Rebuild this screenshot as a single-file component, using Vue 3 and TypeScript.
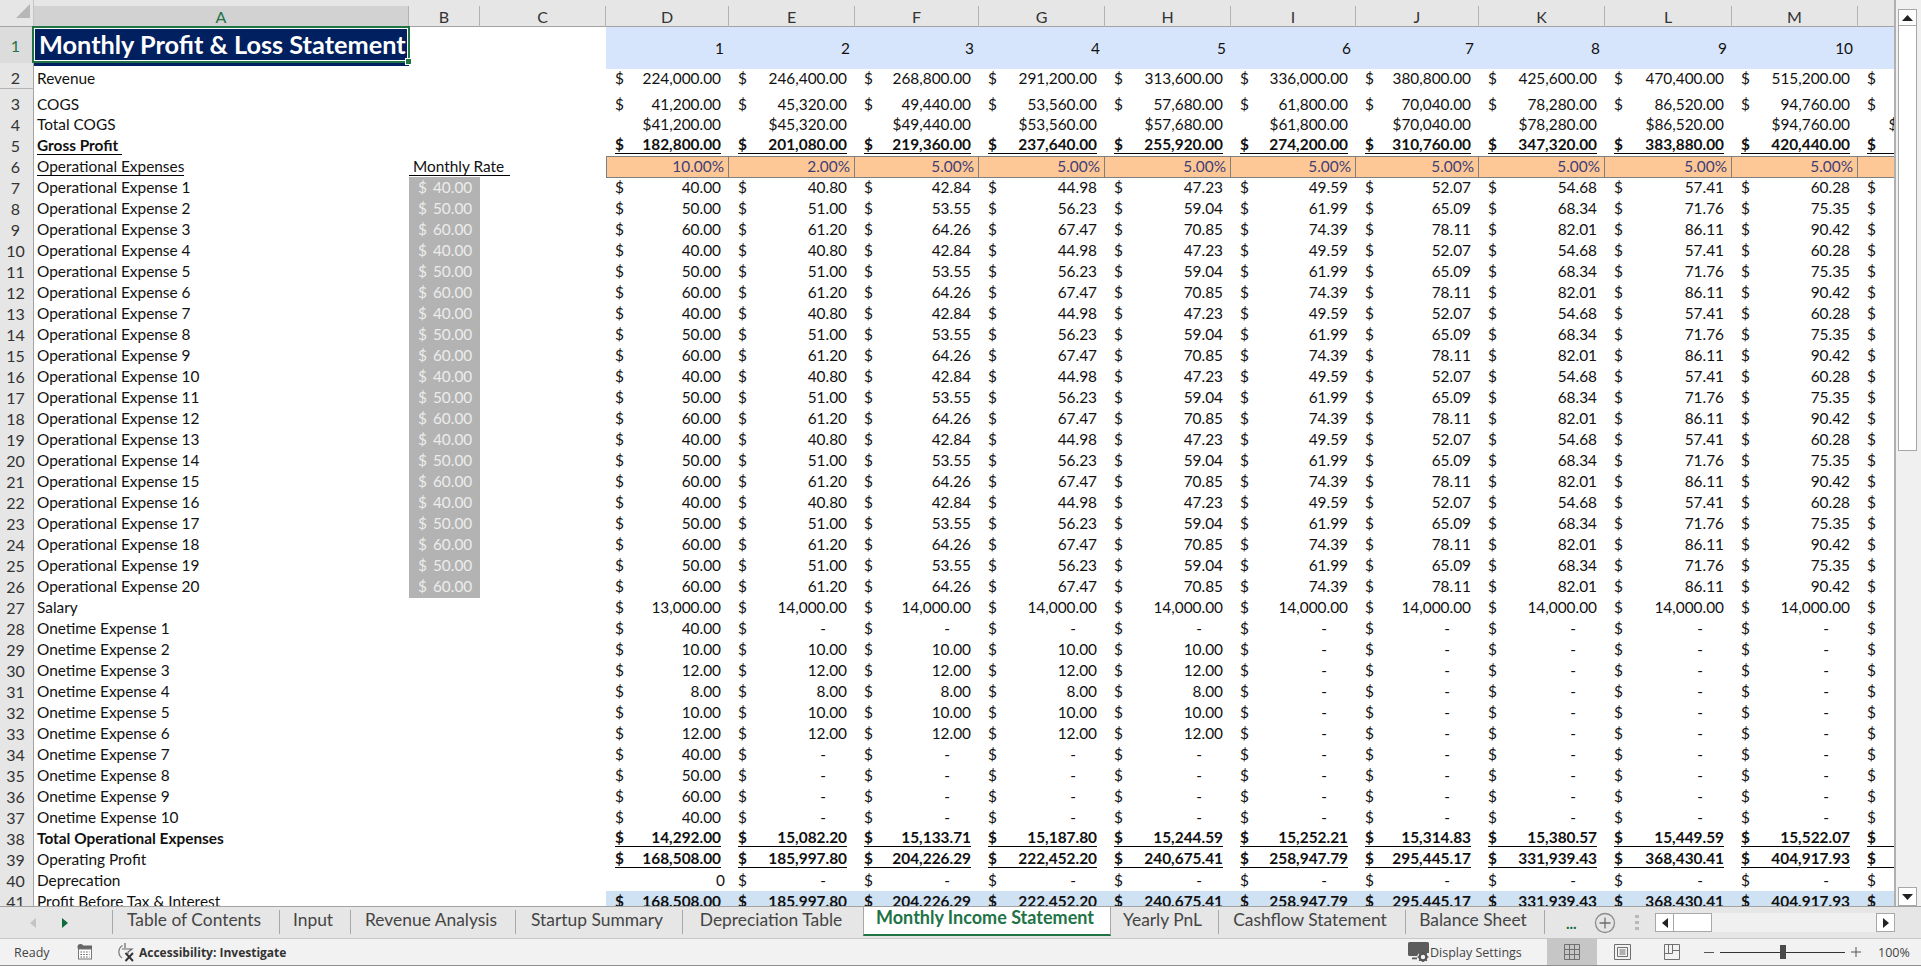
<script setup lang="ts">
interface Cell {
  kind: 'acct' | 'plain' | 'dash' | 'blank';
  text: string;
}

interface Row {
  n: number;
  label: string;
  cls: string;
  rate?: string;
  cells: Cell[];
}

const colLetters = ['D', 'E', 'F', 'G', 'H', 'I', 'J', 'K', 'L', 'M', 'N'];

const acct = (values: string[]): Cell[] => values.map((text) => ({ kind: 'acct', text }));
const plain = (values: string[]): Cell[] => values.map((text) => ({ kind: 'plain', text }));

// amounts of the three repeating operational expenses
const opex: Record<string, string[]> = {
  '40': ['40.00', '40.80', '42.84', '44.98', '47.23', '49.59', '52.07', '54.68', '57.41', '60.28', '63.29'],
  '50': ['50.00', '51.00', '53.55', '56.23', '59.04', '61.99', '65.09', '68.34', '71.76', '75.35', '79.12'],
  '60': ['60.00', '61.20', '64.26', '67.47', '70.85', '74.39', '78.11', '82.01', '86.11', '90.42', '94.94'],
};
const opexRates = ['40', '50', '60', '40', '50', '60', '40', '50', '60', '40', '50', '60', '40', '50', '60', '40', '50', '60', '50', '60'];

const oneTime = (value: string, months: number): Cell[] => {
  const cells: Cell[] = [];
  for (let i = 0; i < 11; i++) {
    cells.push(i < months ? { kind: 'acct', text: value } : { kind: 'dash', text: '-' });
  }
  return cells;
};

const operating = ['168,508.00', '185,997.80', '204,226.29', '222,452.20', '240,675.41', '258,947.79', '295,445.17', '331,939.43', '368,430.41', '404,917.93', '441,402.86'];
const cogs = ['41,200.00', '45,320.00', '49,440.00', '53,560.00', '57,680.00', '61,800.00', '70,040.00', '78,280.00', '86,520.00', '94,760.00', '103,000.00'];

const rows: Row[] = [
  { n: 2, label: 'Revenue', cls: 'r2', cells: acct(['224,000.00', '246,400.00', '268,800.00', '291,200.00', '313,600.00', '336,000.00', '380,800.00', '425,600.00', '470,400.00', '515,200.00', '560,000.00']) },
  { n: 3, label: 'COGS', cls: 'r3', cells: acct(cogs) },
  { n: 4, label: 'Total COGS', cls: '', cells: plain(cogs.map((v) => '$' + v)) },
  { n: 5, label: 'Gross Profit ', cls: 'gross', cells: acct(['182,800.00', '201,080.00', '219,360.00', '237,640.00', '255,920.00', '274,200.00', '310,760.00', '347,320.00', '383,880.00', '420,440.00', '457,000.00']) },
  { n: 6, label: 'Operational Expenses', cls: 'inputs', cells: plain(['10.00%', '2.00%', '5.00%', '5.00%', '5.00%', '5.00%', '5.00%', '5.00%', '5.00%', '5.00%', '5.00%']) },
];

opexRates.forEach((rate, i) => {
  rows.push({ n: 7 + i, label: `Operational Expense ${i + 1}`, cls: '', rate, cells: acct(opex[rate]) });
});

rows.push({ n: 27, label: 'Salary', cls: '', cells: acct(['13,000.00', ...Array(10).fill('14,000.00')]) });

const oneTimes: [string, number][] = [
  ['40.00', 1], ['10.00', 5], ['12.00', 5], ['8.00', 5], ['10.00', 5],
  ['12.00', 5], ['40.00', 1], ['50.00', 1], ['60.00', 1], ['40.00', 1],
];
oneTimes.forEach(([value, months], i) => {
  rows.push({ n: 28 + i, label: `Onetime Expense ${i + 1}`, cls: '', cells: oneTime(value, months) });
});

rows.push(
  { n: 38, label: 'Total Operational Expenses', cls: 'total', cells: acct(['14,292.00', '15,082.20', '15,133.71', '15,187.80', '15,244.59', '15,252.21', '15,314.83', '15,380.57', '15,449.59', '15,522.07', '15,597.14']) },
  { n: 39, label: 'Operating Profit', cls: 'subtotal', cells: acct(operating) },
  { n: 40, label: 'Deprecation', cls: 'depr', cells: [{ kind: 'plain', text: '0' }, ...oneTime('', 0).slice(1)] },
  { n: 41, label: 'Profit Before Tax & Interest', cls: 'ebit', cells: acct(operating) },
);

const months = ['1', '2', '3', '4', '5', '6', '7', '8', '9', '10', ''];

const tabs = ['Table of Contents', 'Input', 'Revenue Analysis', 'Startup Summary', 'Depreciation Table', 'Monthly Income Statement', 'Yearly PnL', 'Cashflow Statement', 'Balance Sheet'];
const activeTab = 'Monthly Income Statement';
</script>

<template>
  <div class="excel">
    <div class="workspace">
      <div class="sheet">
        <div class="row head">
          <div class="corner">
            <svg width="14" height="14" viewBox="0 0 14 14"><path d="M14 0V14H0Z" fill="#b7b7b7" /></svg>
          </div>
          <div class="col selected">A</div>
          <div class="col">B</div>
          <div class="col">C</div>
          <div v-for="c in colLetters" :key="c" class="col">{{ c }}</div>
        </div>

        <div class="row r1">
          <div class="num selected">1</div>
          <div class="a title"><span>Monthly Profit &amp; Loss Statement</span></div>
          <div></div>
          <div></div>
          <div v-for="(m, i) in months" :key="i" class="cell month">{{ m }}</div>
          <div class="selection"><i class="handle"></i></div>
        </div>

        <div v-for="row in rows" :key="row.n" class="row" :class="row.cls">
          <div class="num">{{ row.n }}</div>
          <div class="a"><span class="label">{{ row.label }}</span></div>
          <div v-if="row.rate" class="b rate"><span>$</span><span>{{ row.rate }}.00</span></div>
          <div v-else-if="row.n === 6" class="b heading"><span>Monthly Rate&nbsp;</span></div>
          <div v-else class="b"></div>
          <div></div>
          <div v-for="(cell, i) in row.cells" :key="i" class="cell" :class="cell.kind">
            <template v-if="cell.kind === 'plain'">{{ cell.text }}</template>
            <div v-else class="money"><span>$</span><span>{{ cell.text }}</span></div>
          </div>
        </div>
      </div>

      <div class="vscroll">
        <div class="vbtn"><svg width="11" height="6" viewBox="0 0 11 6"><path d="M5.5 0 11 6H0Z" fill="#222" /></svg></div>
        <div class="vthumb"></div>
        <div class="vbtn down"><svg width="11" height="6" viewBox="0 0 11 6"><path d="M0 0H11L5.5 6Z" fill="#222" /></svg></div>
      </div>
    </div>

    <div class="tabbar">
      <div class="nav">
        <svg width="6" height="10" viewBox="0 0 6 10"><path d="M6 0V10L0 5Z" fill="#c4c4c4" /></svg>
        <svg width="6" height="10" viewBox="0 0 6 10"><path d="M0 0V10L6 5Z" fill="#0e6b3a" /></svg>
      </div>
      <div class="tabs">
        <div v-for="t in tabs" :key="t" class="tab" :class="{ active: t === activeTab }">{{ t }}</div>
      </div>
      <div class="more">...</div>
      <svg class="add" width="22" height="22" viewBox="0 0 22 22">
        <circle cx="11" cy="11" r="9.5" fill="none" stroke="#8c8c8c" stroke-width="1.3" />
        <path d="M11 5.5V16.5M5.5 11H16.5" stroke="#6e6e6e" stroke-width="1.3" />
      </svg>
      <div class="grip"><i></i><i></i><i></i></div>
      <div class="hscroll">
        <div class="hbtn"><svg width="6" height="10" viewBox="0 0 6 10"><path d="M6 0V10L0 5Z" fill="#222" /></svg></div>
        <div class="hthumb"></div>
        <div class="hbtn end"><svg width="6" height="10" viewBox="0 0 6 10"><path d="M0 0V10L6 5Z" fill="#222" /></svg></div>
      </div>
    </div>

    <div class="status">
      <span class="ready">Ready</span>
      <svg class="macro" width="16" height="16" viewBox="0 0 16 16">
        <circle cx="3.5" cy="3" r="3" fill="#666" />
        <rect x="6" y="1.5" width="9" height="3.5" fill="#666" />
        <rect x="1.5" y="5" width="13" height="10" fill="#fff" stroke="#777" />
        <path d="M3.5 8H12.5M3.5 10.5H12.5M3.5 13H12.5" stroke="#555" stroke-dasharray="1.5 1.3" />
      </svg>
      <svg class="access" width="20" height="20" viewBox="0 0 20 20">
        <path d="M5.5 3.5A7.5 7.5 0 0 0 5 16" fill="none" stroke="#777" stroke-width="1.2" />
        <path d="M8 1V6M5 7H15L11 10V12" fill="none" stroke="#666" stroke-width="1.2" />
        <path d="M8.5 11 16 19M16 11 8.5 19" stroke="#333" stroke-width="1.9" />
      </svg>
      <span class="investigate">Accessibility: Investigate</span>

      <svg class="display" width="21" height="20" viewBox="0 0 21 20">
        <path d="M1.5 0H19.5A1.5 1.5 0 0 1 21 1.5V11H11L9 14H1.5A1.5 1.5 0 0 1 0 12.5V1.5A1.5 1.5 0 0 1 1.5 0Z" fill="#5c5c5c" />
        <rect x="4" y="15.5" width="5" height="1.8" fill="#5c5c5c" />
        <circle cx="15" cy="15" r="3.4" fill="none" stroke="#555" stroke-width="2.4" />
        <path d="M15 9.5V11.5M15 18.5V20M9.6 15H11.6M18.4 15H20.4M11.2 11.2 12.6 12.6M17.4 17.4 18.8 18.8M11.2 18.8 12.6 17.4M17.4 12.6 18.8 11.2" stroke="#555" stroke-width="1.6" />
      </svg>
      <span class="display-label">Display Settings</span>
      <div class="view on">
        <svg width="16" height="16" viewBox="0 0 16 16"><path d="M.5.5H15.5V15.5H.5ZM.5 5.5H15.5M.5 10.5H15.5M5.5.5V15.5M10.5.5V15.5" fill="none" stroke="#6f6f6f" /></svg>
      </div>
      <div class="view">
        <svg width="17" height="16" viewBox="0 0 17 16"><path d="M.5.5H16.5V15.5H.5ZM3.5 3.5H13.5V12.5H3.5ZM5.5 6H11.5M5.5 8H11.5M5.5 10H11.5" fill="none" stroke="#6f6f6f" /></svg>
      </div>
      <div class="view">
        <svg width="16" height="16" viewBox="0 0 16 16"><path d="M.5.5H15.5V15.5H.5ZM.5 9.5H8.5V.5M8.5 6.5H15.5M4.5.5V9.5" fill="none" stroke="#6f6f6f" /></svg>
      </div>
      <div class="zoom">
        <i class="sign"></i>
        <div class="slider"><i class="knob"></i></div>
        <svg width="10" height="10" viewBox="0 0 10 10"><path d="M0 5H10M5 0V10" stroke="#555" /></svg>
        <span class="pct">100%</span>
      </div>
    </div>
  </div>
</template>

<style scoped>
.excel {
  width: 1921px;
  height: 966px;
  display: flex;
  flex-direction: column;
  font-family: Lato, "Liberation Sans", sans-serif;
  font-size: 15.4px;
  color: #111;
  background: #fff;
  overflow: hidden;
}

.workspace {
  height: 906px;
  display: flex;
}

.sheet {
  width: 1894px;
  overflow: hidden;
  background: #fff;
}

.row {
  position: relative;
  display: grid;
  grid-template-columns: 34px 375px 71px 126px 123px 126px 124px 126px 126px 125px 123px 126px 127px 126px 126px;
  height: 21px;
  line-height: 20px;
}

.row > div {
  white-space: nowrap;
  min-width: 0;
}

.head {
  height: 27px;
  padding-top: 6px;
  background: #e6e6e6;
  border-bottom: 1px solid #a3a3a3;
  box-sizing: border-box;
}

.corner {
  display: flex;
  justify-content: flex-end;
  padding: 4px 3px 0 0;
  border-right: 1px solid #c4c4c4;
  margin-top: -6px;
  box-sizing: border-box;
}

.col {
  text-align: center;
  font-size: 16px;
  line-height: 21px;
  color: #333;
  border-right: 1px solid #b3b3b3;
  box-sizing: border-box;
}

.col.selected {
  background: #d2d2d2;
  color: #217346;
}

.num {
  background: #e6e6e6;
  border-right: 1px solid #a3a3a3;
  border-bottom: 1px solid #b5b5b5;
  box-sizing: border-box;
  text-align: center;
  font-size: 16px;
  line-height: 21px;
  color: #333;
  padding-right: 2px;
}

.num.selected {
  background: #dcdcdc;
  color: #217346;
  line-height: 38px;
}

.a {
  padding-left: 3px;
}

.r1 {
  height: 36px;
}

.r2 {
  height: 26px;
}

.r3 {
  height: 25px;
}

.r2 > div,
.r3 > div {
  padding-top: 5px;
  box-sizing: border-box;
}

.r2 > .num,
.r3 > .num {
  padding-top: 4px;
}

.title {
  background: #002060;
  color: #fff;
  font-size: 25.3px;
  font-weight: 700;
  line-height: 31px;
  padding-left: 5px;
  margin: 2px 0 3px;
}

.selection {
  position: absolute;
  left: 32px;
  top: -1px;
  width: 378px;
  height: 37px;
  box-sizing: border-box;
  border: 2px solid #217346;
  box-shadow: inset 0 0 0 1px #fff;
}

.handle {
  position: absolute;
  right: -4px;
  bottom: -4px;
  width: 5px;
  height: 5px;
  background: #217346;
  border: 1px solid #fff;
}

.cell {
  box-sizing: border-box;
  padding: 0 8px 0 9px;
}

.month {
  background: #d6e5fb;
  text-align: right;
  padding-right: 5px;
  line-height: 42px;
}

.plain {
  text-align: right;
}

.money {
  display: flex;
  justify-content: space-between;
}

.dash .money span:last-child {
  padding-right: 21px;
}

.rate {
  background: #b3b3b3;
  color: #ececec;
  padding-left: 9px;
  display: flex;
  gap: 6px;
}

.heading span {
  padding: 0 2px 0 4px;
  border-bottom: 1px solid #000;
  display: inline-block;
  line-height: 18px;
}

.inputs .a .label {
  display: inline-block;
  border-bottom: 1px solid #000;
  line-height: 18px;
}

.inputs .cell {
  background: #fec896;
  color: #3f3f76;
  padding: 0 4px 0 0;
  border: 1px solid #7f7f7f;
  border-left: 0;
  line-height: 19px;
}

.inputs .cell:nth-child(5) {
  border-left: 1px solid #7f7f7f;
}

.gross .label {
  font-weight: 700;
  display: inline-block;
  border-bottom: 1px solid #000;
  line-height: 18px;
  white-space: pre;
}

.gross .cell,
.total .cell,
.subtotal .cell {
  font-weight: 700;
}

.gross .money,
.total .money,
.subtotal .money {
  border-bottom: 1px solid #000;
  line-height: 18px;
}

.total .label,
.ebit .cell {
  font-weight: 700;
}

.ebit .cell {
  background: #cfe2f3;
}

.depr > .plain {
  padding-right: 4px;
}

.vscroll {
  width: 27px;
  background: #f0f0f0;
  border-left: 2px solid #b0b0b0;
  box-sizing: border-box;
  padding: 9px 4px 0 2px;
  position: relative;
  display: flex;
  flex-direction: column;
}

.vbtn {
  height: 17px;
  background: #fff;
  border: 1px solid #a8a8a8;
  box-sizing: border-box;
  display: flex;
  align-items: center;
  justify-content: center;
}

.vbtn.down {
  margin-top: auto;
  height: 19px;
}

.vthumb {
  height: 425px;
  background: #fff;
  border: 1px solid #a8a8a8;
  border-top: 0;
  box-sizing: border-box;
}

.tabbar {
  height: 32px;
  background: #e6e6e6;
  border-top: 1px solid #a3a3a3;
  box-sizing: border-box;
  display: flex;
  align-items: center;
  position: relative;
}

.nav {
  width: 112px;
  box-sizing: border-box;
  padding-left: 30px;
  display: flex;
  gap: 26px;
}

.tabs {
  display: grid;
  grid-template-columns: 167px 71px 165px 167px 181px 248px 107px 187px 140px;
  height: 31px;
  font-size: 17.4px;
  color: #444;
}

.tab {
  display: flex;
  align-items: center;
  justify-content: center;
  position: relative;
  border-left: 1px solid #a8a8a8;
  box-sizing: border-box;
  margin-top: 3px;
  height: 24px;
  padding: 0 4px 6px 0;
}

.tab:last-child {
  border-right: 1px solid #a8a8a8;
}

.tab.active {
  margin-top: 0;
  height: 29px;
  padding-bottom: 8px;
  background: #fff;
  color: #217346;
  font-weight: 700;
  font-size: 18px;
  border: 1px solid #a8a8a8;
  border-top: 0;
  border-bottom: 2px solid #217346;
}

.tab.active + .tab {
  border-left: 0;
}

.more {
  margin-left: 21px;
  width: 17px;
  color: #0e6b3a;
  font-weight: 700;
  font-size: 15px;
  line-height: 16px;
}

.add {
  margin-left: 11px;
}

.grip {
  margin-left: 19px;
  display: flex;
  flex-direction: column;
  gap: 3px;
}

.grip i {
  display: block;
  width: 4px;
  height: 3px;
  background: #b9b9b9;
}

.hscroll {
  margin-left: 16px;
  width: 240px;
  height: 19px;
  background: #f0f0f0;
  display: flex;
}

.hbtn {
  width: 19px;
  height: 19px;
  background: #fff;
  border: 1px solid #a8a8a8;
  box-sizing: border-box;
  display: flex;
  align-items: center;
  justify-content: center;
}

.hbtn.end {
  margin-left: auto;
}

.hthumb {
  width: 38px;
  background: #fff;
  border: 1px solid #a8a8a8;
  border-left: 0;
  box-sizing: border-box;
}

.status {
  height: 28px;
  background: #f2f2f2;
  border-top: 1px solid #c6c6c6;
  border-bottom: 1px solid #8f8f8f;
  box-sizing: border-box;
  display: flex;
  align-items: center;
  font-family: "Open Sans", Lato, sans-serif;
  font-size: 12.5px;
  color: #444;
}

.ready {
  margin-left: 14px;
  width: 63px;
}

.access {
  margin-left: 24px;
}

.investigate {
  margin-left: 2px;
  font-weight: 700;
  color: #333;
  font-size: 12px;
}

.display {
  margin-left: auto;
}

.display-label {
  margin-left: 1px;
  width: 117px;
}

.view {
  width: 50px;
  height: 26px;
  display: flex;
  align-items: center;
  justify-content: center;
}

.view.on {
  background: #c6c6c6;
}

.zoom {
  display: flex;
  align-items: center;
  margin-left: 7px;
  width: 217px;
}

.sign {
  display: block;
  width: 10px;
  height: 1px;
  background: #555;
}

.slider {
  position: relative;
  margin: 0 6px;
  width: 125px;
  height: 1px;
  background: #333;
}

.knob {
  position: absolute;
  left: 60px;
  top: -7px;
  width: 6px;
  height: 14px;
  background: #4a4a4a;
}

.pct {
  margin-left: 17px;
}
</style>

<style>
html,
body {
  margin: 0;
  overflow: hidden;
}
</style>
